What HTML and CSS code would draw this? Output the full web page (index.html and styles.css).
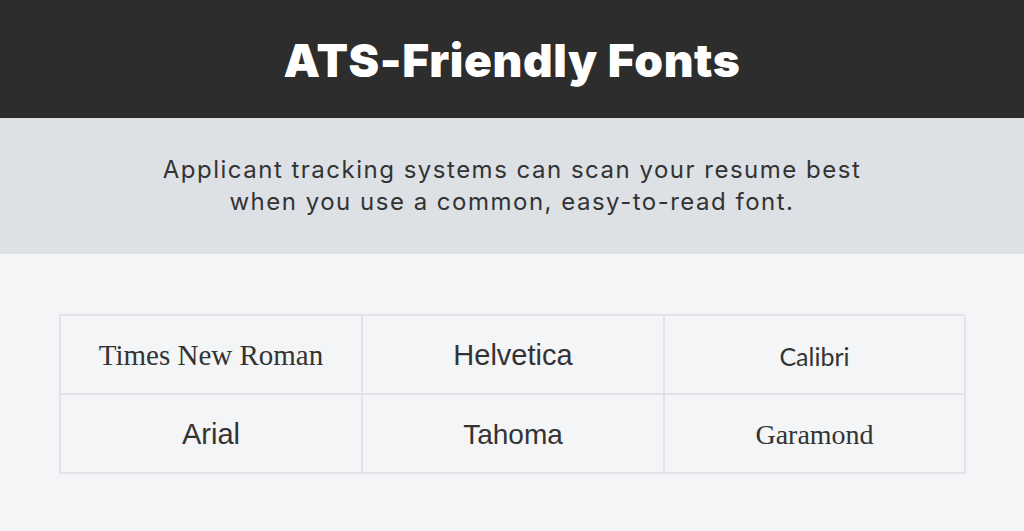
FILE: index.html
```html
<!DOCTYPE html>
<html>
<head>
<meta charset="utf-8">
<link rel="stylesheet" href="styles.css">
</head>
<body>
<header class="hero">
  <h1 class="title">ATS-Friendly Fonts</h1>
</header>
<section class="intro">
  <p class="lead">Applicant tracking systems can scan your resume best<br>when you use a common, easy-to-read font.</p>
</section>
<main class="content">
  <div class="grid">
    <div class="cell f-times">Times New Roman</div>
    <div class="cell f-helv">Helvetica</div>
    <div class="cell f-calibri">Calibri</div>
    <div class="cell f-arial">Arial</div>
    <div class="cell f-tahoma">Tahoma</div>
    <div class="cell f-garamond">Garamond</div>
  </div>
</main>
</body>
</html>
```
FILE: styles.css
```css
* { box-sizing: border-box; }
html, body { margin: 0; padding: 0; }
body {
  width: 1024px;
  height: 531px;
  overflow: hidden;
  background: #f4f5f7;
  font-family: "Inter", "Liberation Sans", sans-serif;
  color: #333333;
}
.hero {
  height: 118px;
  background: #2d2d2d;
  display: flex;
  align-items: center;
  justify-content: center;
}
.title {
  margin: 0;
  color: #ffffff;
  font-family: "Inter", sans-serif;
  font-weight: 900;
  font-size: 46px;
  letter-spacing: 0.6px;
  line-height: 1;
  padding-top: 2px;
}
.intro {
  height: 136px;
  background: #dde1e5;
  display: flex;
  align-items: center;
  justify-content: center;
}
.lead {
  margin: 0;
  text-align: center;
  font-family: "Inter", sans-serif;
  font-size: 24px;
  line-height: 32px;
  color: #333333;
  letter-spacing: 1.5px;
}
.content {
  padding: 60px 59px 0 59px;
}
.grid {
  display: grid;
  grid-template-columns: 302px 302px 301px;
  grid-template-rows: 79px 79px;
  border-top: 2px solid #e1e3e7;
  border-left: 2px solid #e1e3e7;
  width: 906px;
}
.cell {
  display: flex;
  align-items: center;
  justify-content: center;
  border-right: 2px solid #e1e3e7;
  border-bottom: 2px solid #e1e3e7;
  color: #333333;
  padding-top: 2px;
}
.f-times { font-family: "Liberation Serif", serif; font-size: 29px; }
.f-helv { font-family: "Liberation Sans", sans-serif; font-size: 29px; }
.f-calibri { font-family: "Lato", "Open Sans", sans-serif; font-size: 25px; }
.f-arial { font-family: "Liberation Sans", sans-serif; font-size: 29px; }
.f-tahoma { font-family: "Liberation Sans", sans-serif; font-size: 28px; }
.f-garamond { font-family: "Liberation Serif", serif; font-size: 28px; }
```
